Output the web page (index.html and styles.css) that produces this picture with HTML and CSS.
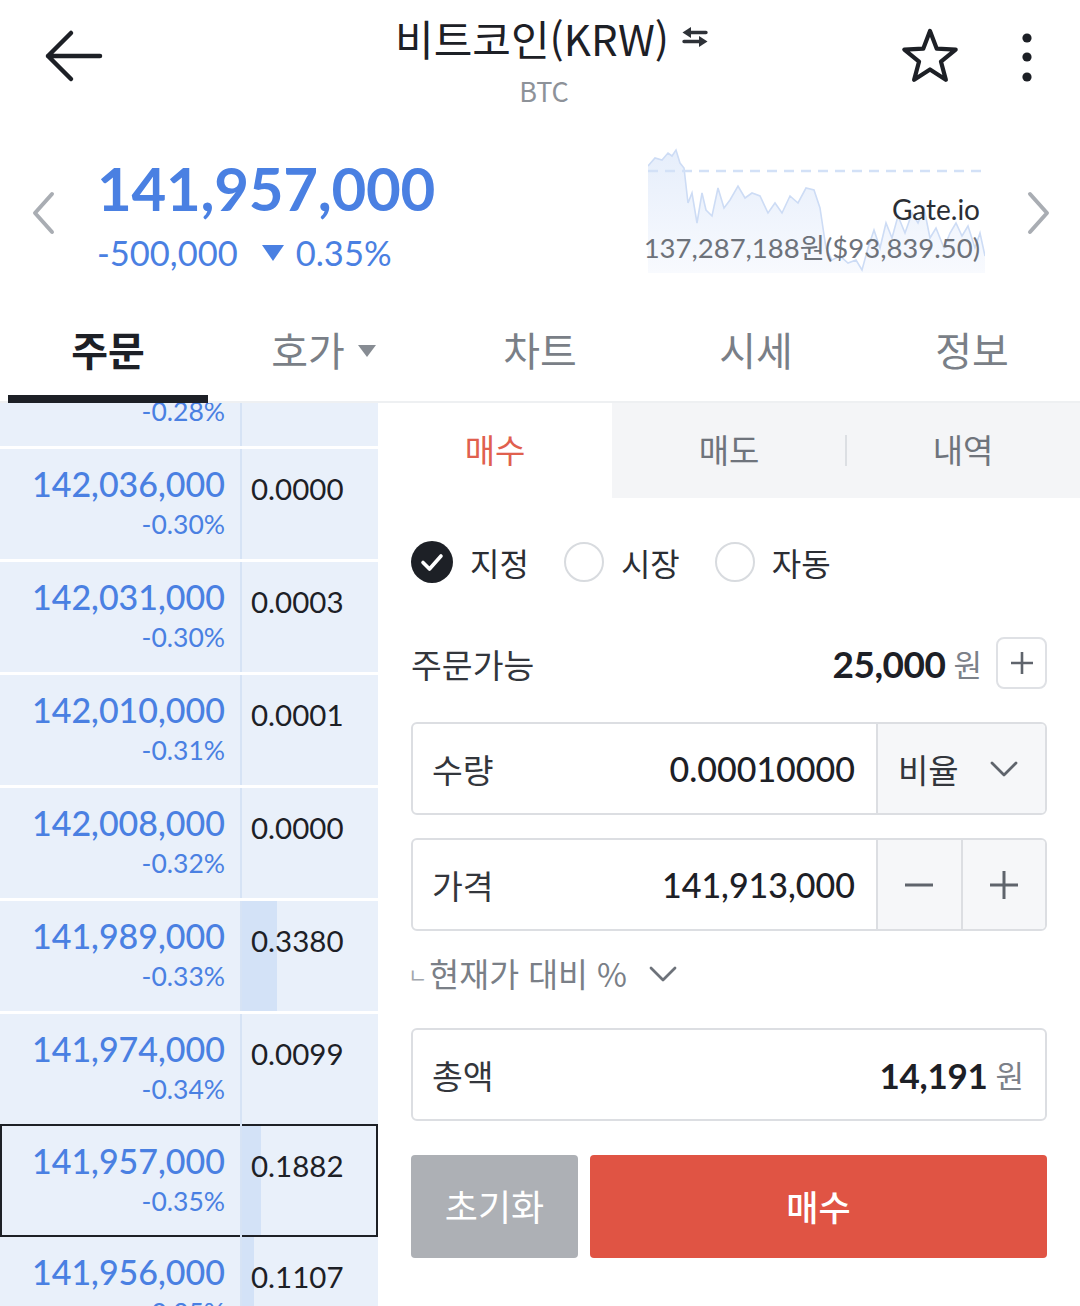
FILE: index.html
```html
<!DOCTYPE html>
<html lang="ko">
<head>
<meta charset="utf-8">
<title>비트코인(KRW)</title>
<link rel="stylesheet" href="styles.css">
</head>
<body>
<div class="app">
  <header class="topbar">
    <div class="tb-side tb-left">
      <svg class="ic-back" width="70" height="60" viewBox="0 0 70 60"><path d="M8 30 H60 M31 7 L8 30 L31 53" fill="none" stroke="#1d2026" stroke-width="4.5" stroke-linecap="round" stroke-linejoin="round"/></svg>
    </div>
    <div class="tb-title">
      <div class="title-line">
        <span class="title">비트코인(KRW)</span>
        <svg class="ic-swap" width="28" height="26" viewBox="0 0 28 26"><path d="M9 8.5 H25 M3 17.5 H19" fill="none" stroke="#2e3238" stroke-width="3.4" stroke-linecap="round"/><polygon points="1.5,8.5 10,3 10,14" fill="#2e3238"/><polygon points="26.5,17.5 18,12 18,23" fill="#2e3238"/></svg>
      </div>
      <div class="subtitle">BTC</div>
    </div>
    <div class="tb-side tb-right">
      <svg class="ic-star" width="60" height="60" viewBox="0 0 60 60"><polygon points="30,4 36.76,21.7 55.68,22.66 40.94,34.55 45.87,52.84 30,42.5 14.13,52.84 19.06,34.55 4.32,22.66 23.24,21.7" fill="none" stroke="#1d2026" stroke-width="4.2" stroke-linejoin="round"/></svg>
      <svg class="ic-more" width="12" height="56" viewBox="0 0 12 56"><circle cx="6" cy="7" r="4.6" fill="#1d2026"/><circle cx="6" cy="26" r="4.6" fill="#1d2026"/><circle cx="6" cy="46" r="4.6" fill="#1d2026"/></svg>
    </div>
  </header>

  <section class="ticker">
    <svg class="chev chev-left" width="26" height="44" viewBox="0 0 26 44"><path d="M22 3 L5 22 L22 41" fill="none" stroke="#a9adb3" stroke-width="4" stroke-linecap="round" stroke-linejoin="round"/></svg>
    <div class="price-block">
      <div class="price-big">141,957,000</div>
      <div class="price-sub"><span>-500,000</span><svg class="tri-down" width="22" height="18" viewBox="0 0 22 18"><polygon points="0,1 22,1 11,17" fill="#4a80e2"/></svg><span>0.35%</span></div>
    </div>
    <div class="spark">
      <svg class="spark-chart" width="337" height="125" viewBox="0 0 337 125">
        <defs>
          <linearGradient id="sg" x1="0" y1="0" x2="0" y2="1">
            <stop offset="0" stop-color="#e6eefb"/>
            <stop offset="1" stop-color="#f8fafe"/>
          </linearGradient>
        </defs>
        <path d="M0 18 L7 10 L14 12 L20 5 L24 8 L28 2 L32 15 L36 20 L40 55 L44 45 L49 75 L54 45 L58 62 L64 68 L70 40 L76 60 L82 52 L90 38 L97 50 L104 45 L112 48 L120 65 L127 55 L134 65 L142 48 L150 55 L158 40 L166 42 L172 60 L178 100 L184 112 L192 108 L200 115 L208 112 L214 122 L220 100 L226 82 L232 100 L238 75 L244 90 L250 68 L257 85 L264 65 L270 75 L276 60 L282 90 L288 80 L296 100 L302 85 L308 75 L314 88 L320 78 L327 100 L332 85 L337 108 L337 125 L0 125 Z" fill="url(#sg)"/>
        <polyline points="0,18 7,10 14,12 20,5 24,8 28,2 32,15 36,20 40,55 44,45 49,75 54,45 58,62 64,68 70,40 76,60 82,52 90,38 97,50 104,45 112,48 120,65 127,55 134,65 142,48 150,55 158,40 166,42 172,60 178,100 184,112 192,108 200,115 208,112 214,122 220,100 226,82 232,100 238,75 244,90 250,68 257,85 264,65 270,75 276,60 282,90 288,80 296,100 302,85 308,75 314,88 320,78 327,100 332,85 337,108" fill="none" stroke="#cddcf5" stroke-width="1.6"/>
        <line x1="0" y1="23" x2="337" y2="23" stroke="#d3e1f7" stroke-width="2.5" stroke-dasharray="10 7"/>
      </svg>
      <div class="spark-text">
        <div class="exch">Gate.io</div>
        <div class="gprice">137,287,188원($93,839.50)</div>
      </div>
    </div>
    <svg class="chev chev-right" width="26" height="44" viewBox="0 0 26 44"><path d="M4 3 L21 22 L4 41" fill="none" stroke="#a9adb3" stroke-width="4" stroke-linecap="round" stroke-linejoin="round"/></svg>
  </section>

  <nav class="tabs">
    <div class="tab active">주문</div>
    <div class="tab">호가<svg class="tab-tri" width="20" height="14" viewBox="0 0 20 14"><polygon points="1,1 19,1 10,13" fill="#878c93"/></svg></div>
    <div class="tab">차트</div>
    <div class="tab">시세</div>
    <div class="tab">정보</div>
  </nav>

  <main class="main">
    <div class="book">
      <div class="book-inner">
        <div class="row"><div class="pcol"><div class="bp">142,040,000</div><div class="bpct">-0.28%</div></div><div class="qcol"><span class="q">0.0012</span></div></div>
        <div class="row"><div class="pcol"><div class="bp">142,036,000</div><div class="bpct">-0.30%</div></div><div class="qcol"><span class="q">0.0000</span></div></div>
        <div class="row"><div class="pcol"><div class="bp">142,031,000</div><div class="bpct">-0.30%</div></div><div class="qcol"><span class="q">0.0003</span></div></div>
        <div class="row"><div class="pcol"><div class="bp">142,010,000</div><div class="bpct">-0.31%</div></div><div class="qcol"><span class="q">0.0001</span></div></div>
        <div class="row"><div class="pcol"><div class="bp">142,008,000</div><div class="bpct">-0.32%</div></div><div class="qcol"><span class="q">0.0000</span></div></div>
        <div class="row"><div class="pcol"><div class="bp">141,989,000</div><div class="bpct">-0.33%</div></div><div class="qcol"><div class="vbar" style="width:35px"></div><span class="q">0.3380</span></div></div>
        <div class="row"><div class="pcol"><div class="bp">141,974,000</div><div class="bpct">-0.34%</div></div><div class="qcol"><span class="q">0.0099</span></div></div>
        <div class="row sel"><div class="pcol"><div class="bp">141,957,000</div><div class="bpct">-0.35%</div></div><div class="qcol"><div class="vbar" style="width:19px"></div><span class="q">0.1882</span></div></div>
        <div class="row"><div class="pcol"><div class="bp">141,956,000</div><div class="bpct">-0.35%</div></div><div class="qcol"><div class="vbar" style="width:12px"></div><span class="q">0.1107</span></div></div>
      </div>
    </div>

    <div class="panel">
      <div class="subtabs">
        <div class="subtab active">매수</div>
        <div class="subtab">매도</div>
        <div class="subtab sep">내역</div>
      </div>
      <div class="form">
        <div class="radios">
          <div class="radio"><span class="r-circle on"><svg width="42" height="42" viewBox="0 0 42 42"><path d="M12 21.5 L18.5 28 L30 15" fill="none" stroke="#fff" stroke-width="3.6" stroke-linecap="round" stroke-linejoin="round"/></svg></span><span class="r-label">지정</span></div>
          <div class="radio"><span class="r-circle"></span><span class="r-label">시장</span></div>
          <div class="radio"><span class="r-circle"></span><span class="r-label">자동</span></div>
        </div>

        <div class="avail">
          <span class="lbl">주문가능</span>
          <span class="avail-val">25,000</span>
          <span class="won">원</span>
          <span class="plus-box"><svg width="26" height="26" viewBox="0 0 26 26"><path d="M13 2 V24 M2 13 H24" stroke="#5f646c" stroke-width="2.6"/></svg></span>
        </div>

        <div class="field">
          <div class="field-main"><span class="lbl">수량</span><span class="fval">0.00010000</span></div>
          <div class="field-side ratio"><span class="side-lbl">비율</span><svg class="dd" width="28" height="16" viewBox="0 0 28 16"><path d="M2 2 L14 14 L26 2" fill="none" stroke="#5f646c" stroke-width="2.8" stroke-linecap="round" stroke-linejoin="round"/></svg></div>
        </div>

        <div class="field field-price">
          <div class="field-main"><span class="lbl">가격</span><span class="fval">141,913,000</span></div>
          <div class="field-side steps">
            <span class="step"><svg width="32" height="32" viewBox="0 0 32 32"><path d="M2 16 H30" stroke="#5f646c" stroke-width="3"/></svg></span>
            <span class="step step-plus"><svg width="32" height="32" viewBox="0 0 32 32"><path d="M16 2 V30 M2 16 H30" stroke="#5f646c" stroke-width="3"/></svg></span>
          </div>
        </div>

        <div class="cmp">
          <span class="cmp-l">ㄴ</span>
          <span class="cmp-t">현재가 대비 %</span>
          <svg class="cmp-dd" width="28" height="16" viewBox="0 0 28 16"><path d="M2 2 L14 14 L26 2" fill="none" stroke="#6d727a" stroke-width="2.8" stroke-linecap="round" stroke-linejoin="round"/></svg>
        </div>

        <div class="field field-total">
          <div class="field-main"><span class="lbl">총액</span><span class="tot"><span class="tot-val">14,191</span><span class="won">원</span></span></div>
        </div>

        <div class="actions">
          <div class="btn btn-reset">초기화</div>
          <div class="btn btn-buy">매수</div>
        </div>
      </div>
    </div>
  </main>
</div>
</body>
</html>
```

FILE: styles.css
```css
* { box-sizing: border-box; }
html, body { margin: 0; padding: 0; background: #fff; }
body {
  width: 1080px;
  height: 1306px;
  overflow: hidden;
  font-family: "Noto Sans CJK KR", "Noto Sans", sans-serif;
  color: #1d2026;
}
.app { width: 1080px; height: 1306px; display: flex; flex-direction: column; }

/* top bar */
.topbar { height: 120px; display: flex; align-items: flex-start; }
.tb-side { width: 200px; height: 120px; display: flex; flex-shrink: 0; }
.tb-left { padding: 26px 0 0 40px; }
.tb-right { justify-content: flex-end; padding: 27px 47px 0 0; gap: 61px; }
.ic-more { margin-top: 4px; flex-shrink: 0; }
.ic-star { flex-shrink: 0; }
.tb-title { flex: 1; display: flex; flex-direction: column; align-items: center; padding: 12px 0 0 8px; }
.title-line { display: flex; align-items: center; height: 52px; padding-left: 16px; }
.title { font-size: 42px; line-height: 52px; color: #1d2026; }
.ic-swap { margin-left: 12px; margin-top: -2px; }
.subtitle { font-size: 27px; line-height: 34px; margin-top: 10px; color: #8d9299; }

/* ticker */
.ticker { height: 180px; display: flex; align-items: center; padding: 0 28px 0 30px; }
.chev-left { margin-top: 6px; flex-shrink: 0; }
.chev-right { margin-left: 41px; margin-top: 6px; flex-shrink: 0; }
.price-block { margin-left: 41px; display: flex; flex-direction: column; padding-top: 6px; }
.price-big { font-family: Lato, sans-serif; font-weight: 700; font-size: 60px; line-height: 70px; color: #4a80e2; letter-spacing: -0.3px; }
.price-sub { display: flex; align-items: center; margin-top: 10px; font-family: Lato, sans-serif; font-size: 34.5px; line-height: 40px; color: #4a80e2; }
.tri-down { margin: 0 12px 0 24px; }
.spark { margin-left: auto; width: 337px; height: 125px; position: relative; flex-shrink: 0; }
.spark-chart { position: absolute; left: 0; top: 0; }
.spark-text { position: relative; display: flex; flex-direction: column; align-items: flex-end; padding: 44px 5px 0 0; }
.exch { font-family: Lato, sans-serif; font-size: 28px; line-height: 34px; color: #2b2e34; }
.gprice { font-family: Lato, "Noto Sans CJK KR", sans-serif; font-size: 27.5px; line-height: 34px; margin-top: 5px; color: #6d727a; margin-right: 0; white-space: nowrap; }

/* tabs */
.tabs { height: 103px; display: grid; grid-template-columns: repeat(5, 1fr); border-bottom: 2px solid #eef0f2; }
.tab { position: relative; display: flex; align-items: center; justify-content: center; font-size: 40px; line-height: 50px; color: #7a7f87; padding-bottom: 4px; }
.tab.active { color: #1d2026; font-weight: 700; }
.tab.active::after { content: ""; position: absolute; left: 8px; right: 8px; bottom: -2px; height: 8px; background: #1d2026; }
.tab-tri { margin-left: 12px; margin-top: 4px; }

/* main */
.main { flex: 1; display: flex; min-height: 0; }

/* order book */
.book { width: 378px; overflow: hidden; background: #fff; flex-shrink: 0; }
.book-inner { display: flex; flex-direction: column; gap: 3px; margin-top: -67px; }
.row { height: 110px; display: flex; background: #e9f0fa; flex-shrink: 0; }
.row.sel { margin: -3px 0; height: 113px; box-shadow: inset 0 0 0 2px #1d2026; position: relative; }
.pcol { width: 242px; border-right: 2px solid #d6e3f5; display: flex; flex-direction: column; align-items: flex-end; padding: 15px 15px 0 0; }
.row.sel .pcol { padding-top: 17px; }
.bp { font-family: Lato, sans-serif; font-weight: 500; font-size: 34px; line-height: 40px; color: #4a80e2; }
.bpct { font-family: Lato, sans-serif; font-size: 26.5px; line-height: 40px; color: #4a80e2; }
.qcol { flex: 1; position: relative; padding: 20px 0 0 9px; }
.row.sel .qcol { padding-top: 22px; }
.vbar { position: absolute; left: 0; top: 0; bottom: 0; background: #d3e2f7; }
.row.sel .vbar { top: 2px; bottom: 2px; }
.q { position: relative; font-family: Lato, sans-serif; font-size: 29.5px; line-height: 40px; color: #1d2026; }

/* panel */
.panel { flex: 1; display: flex; flex-direction: column; }
.subtabs { height: 95px; display: grid; grid-template-columns: repeat(3, 1fr); }
.subtab { position: relative; display: flex; align-items: center; justify-content: center; background: #f4f5f7; font-size: 33px; line-height: 44px; color: #6f747c; padding-bottom: 4px; }
.subtab.active { background: #fff; color: #e0604e; }
.subtab.sep::before { content: ""; position: absolute; left: -1px; top: 32px; height: 31px; width: 2px; background: #dcdfe3; }

.form { display: flex; flex-direction: column; padding: 0 33px; }
.radios { margin-top: 43px; height: 42px; display: flex; align-items: center; }
.radio { display: flex; align-items: center; margin-right: 34px; }
.r-circle { width: 40px; height: 40px; border: 2px solid #d8dbdf; border-radius: 50%; display: block; margin-left: 1px; flex-shrink: 0; }
.r-circle.on { width: 42px; height: 42px; border: none; background: #1d2026; margin-left: 0; }
.r-circle svg { display: block; }
.r-label { font-size: 32px; line-height: 42px; margin-left: 17px; color: #2b2e34; }

.avail { margin-top: 54px; height: 52px; display: flex; align-items: center; }
.lbl { font-size: 33.5px; color: #33363c; }
.avail .lbl { margin-right: auto; }
.avail-val { font-family: Lato, sans-serif; font-weight: 700; font-size: 37px; color: #1d2026; letter-spacing: -0.5px; }
.won { font-size: 31px; color: #7c8189; margin-left: 8px; }
.plus-box { width: 51px; height: 52px; margin-left: 14px; border: 2px solid #dfe1e5; border-radius: 8px; display: flex; align-items: center; justify-content: center; }

.field { margin-top: 33px; height: 93px; border: 2px solid #dcdee2; border-radius: 6px; display: flex; overflow: hidden; }
.field-price { margin-top: 23px; }
.field-total { margin-top: 36px; }
.field-main { flex: 1; display: flex; align-items: center; justify-content: space-between; padding: 0 21px 0 19px; }
.fval { font-family: Lato, sans-serif; font-weight: 500; font-size: 34px; color: #1d2026; }
.field-side { width: 169px; background: #f6f7f9; border-left: 2px solid #dcdee2; display: flex; align-items: center; flex-shrink: 0; }
.ratio { padding: 0 27px 0 20px; }
.side-lbl { font-size: 33px; color: #33363c; }
.dd { margin-left: auto; }
.steps { align-items: stretch; }
.step { flex: 1; display: flex; align-items: center; justify-content: center; }
.step-plus { border-left: 2px solid #dcdee2; }

.cmp { margin-top: 21px; height: 40px; display: flex; align-items: center; color: #7a7f87; }
.cmp-l { font-size: 21px; color: #a2a6ad; margin-top: 4px; margin-right: 2px; margin-left: -3px; }
.cmp-t { font-size: 32.5px; }
.cmp-dd { margin-left: 22px; margin-top: 3px; }

.tot { display: flex; align-items: center; }
.tot-val { font-family: Lato, sans-serif; font-weight: 700; font-size: 35px; color: #1d2026; letter-spacing: -0.3px; }

.actions { margin-top: 34px; height: 103px; display: flex; gap: 12px; }
.btn { display: flex; align-items: center; justify-content: center; color: #fff; border-radius: 4px; padding-bottom: 3px; }
.btn-reset { width: 167px; background: #adb0b5; font-size: 36px; }
.btn-buy { flex: 1; background: #e05444; font-size: 35px; font-weight: 500; }
```
